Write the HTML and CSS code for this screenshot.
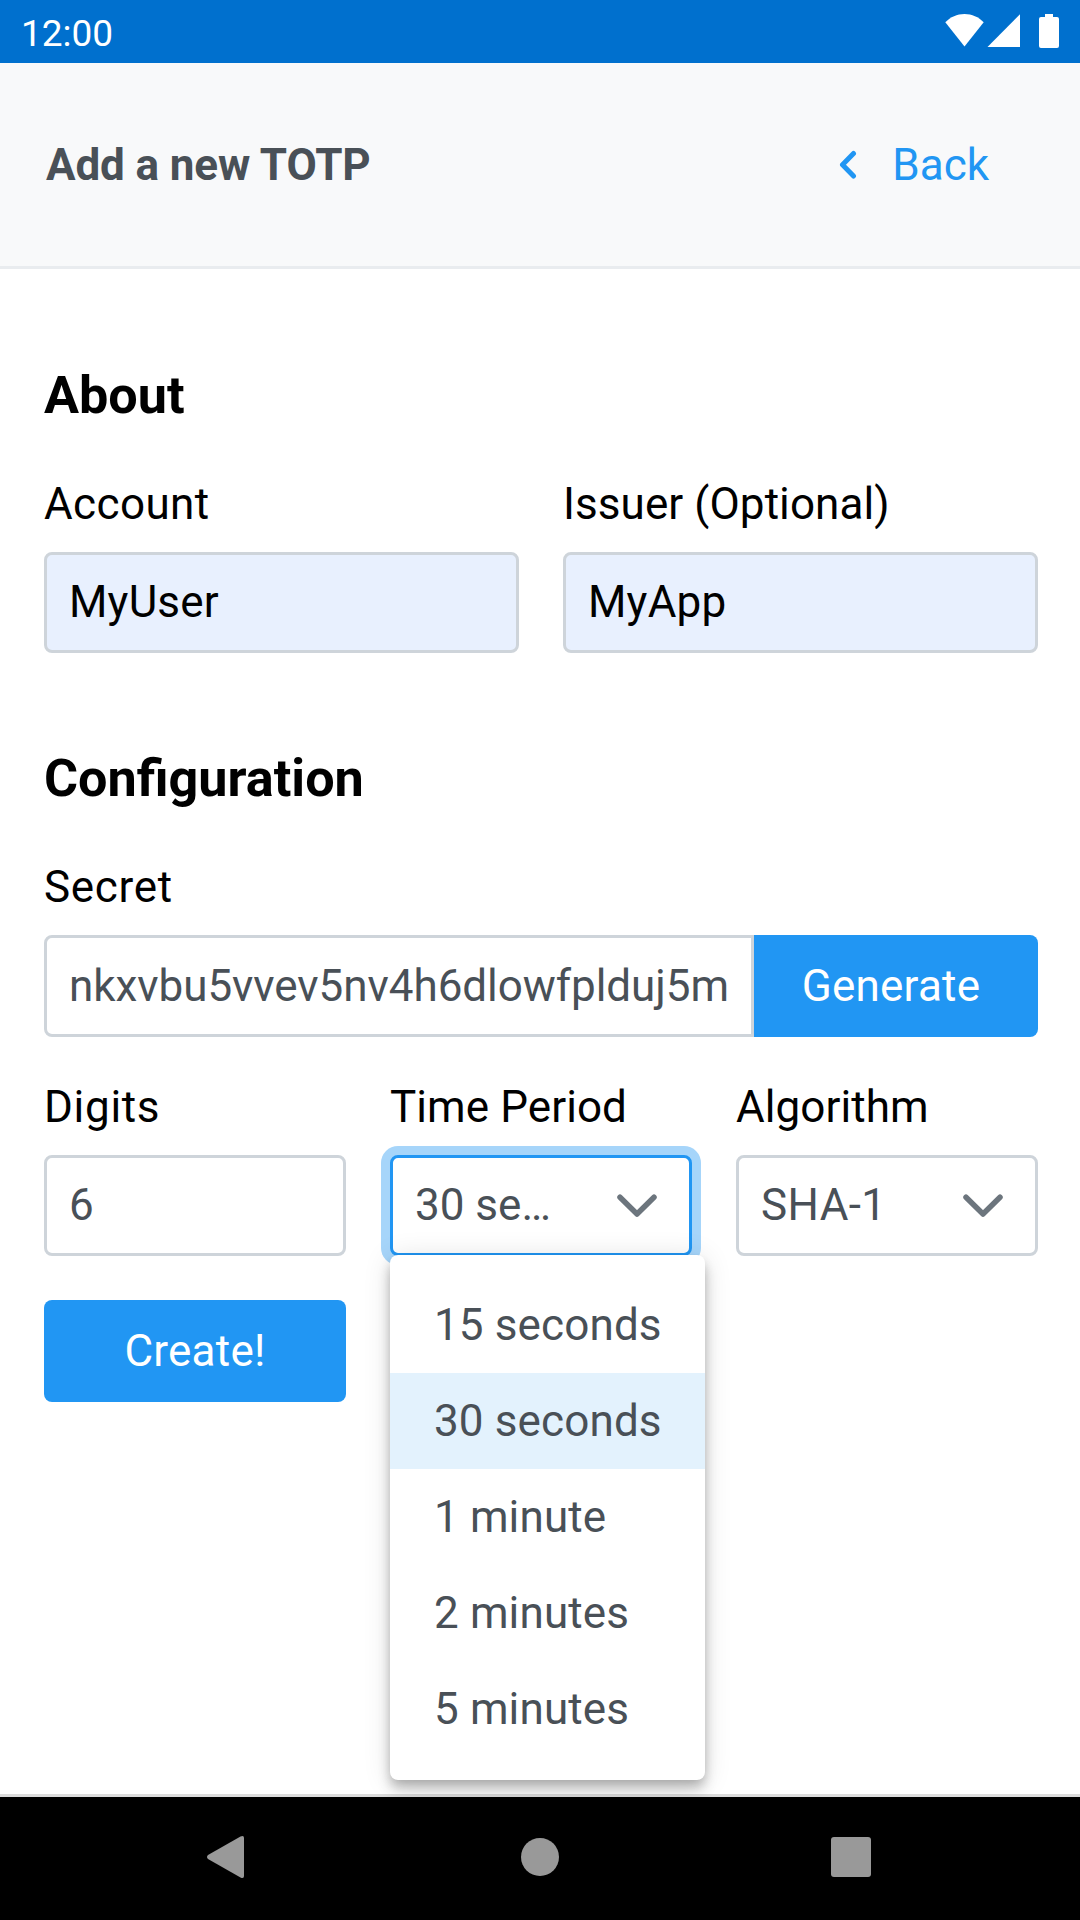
FILE: index.html
```html
<!DOCTYPE html>
<html lang="en">
<head>
<meta charset="utf-8">
<title>Add a new TOTP</title>
<link rel="stylesheet" href="styles.css">
</head>
<body>
<div class="status-bar">
  <span class="clock">12:00</span>
  <svg class="status-icons" width="116" height="36" viewBox="0 0 116 36" fill="#fff">
    <path d="M0.3 9.3C5.5 4 12 1 19.5 1s14 3 19.2 8.300L19.500 33.500z"/>
    <path d="M75 1.300V34H42.500z"/>
    <path d="M100 1h8v3h4q2 0 2 2v27q0 2-2 2h-16q-2 0-2-2V6q0-2 2-2h4z"/>
  </svg>
</div>
<header class="header">
  <h1 class="title">Add a new TOTP</h1>
  <a class="back">
    <svg width="18" height="30" viewBox="0 0 18 30" fill="none" stroke="#2196f3" stroke-width="5" stroke-linecap="round" stroke-linejoin="round"><path d="M14.500 3.500L3.500 14.800L14.500 26"/></svg>
    <span>Back</span>
  </a>
</header>
<main class="content">
  <h2 class="heading">About</h2>
  <div class="row two">
    <label class="field"><span class="label">Account</span><input class="input filled" value="MyUser"></label>
    <label class="field"><span class="label tight">Issuer (Optional)</span><input class="input filled" value="MyApp"></label>
  </div>
  <h2 class="heading second">Configuration</h2>
  <div class="field">
    <span class="label loose">Secret</span>
    <div class="group"><input class="input secret" value="nkxvbu5vvev5nv4h6dlowfplduj5m"><button class="button generate">Generate</button></div>
  </div>
  <div class="row three">
    <label class="field"><span class="label loose">Digits</span><input class="input" value="6"></label>
    <div class="field">
      <span class="label tight">Time Period</span>
      <div class="input select focused">
        <span class="value">30 seconds</span>
        <svg class="chevron" width="40" height="24" viewBox="0 0 40 24"><path d="M3 3.200L20 20L37 3.200"/></svg>
        <ul class="menu">
          <li>15 seconds</li>
          <li class="selected">30 seconds</li>
          <li>1 minute</li>
          <li>2 minutes</li>
          <li>5 minutes</li>
        </ul>
      </div>
    </div>
    <div class="field">
      <span class="label tight">Algorithm</span>
      <div class="input select">
        <span class="value algorithm">SHA-1</span>
        <svg class="chevron" width="40" height="24" viewBox="0 0 40 24"><path d="M3 3.200L20 20L37 3.200"/></svg>
      </div>
    </div>
    <button class="button create">Create!</button>
  </div>
</main>
<nav class="nav-bar">
  <svg width="38" height="44" viewBox="0 0 38 44" fill="#999"><path d="M1 20L33.500 1.500Q37 0 37 3V41Q37 44 33.500 42.500L1 24Q-1 22 1 20z"/></svg>
  <svg class="home" width="38" height="38" viewBox="0 0 38 38" fill="#999"><circle cx="19" cy="19" r="19"/></svg>
  <svg width="40" height="40" viewBox="0 0 40 40" fill="#999"><rect width="40" height="40" rx="3"/></svg>
</nav>
</body>
</html>
```

FILE: styles.css
```css
* { box-sizing: border-box; }

body {
  display: flex;
  flex-direction: column;
  width: 1080px;
  height: 1920px;
  margin: 0;
  overflow: hidden;
  background: #fff;
  color: #000;
  font: 44px/52px Roboto, sans-serif;
}

.status-bar {
  display: flex;
  justify-content: space-between;
  height: 63px;
  padding: 13px 19px 0 21px;
  background: #0070ce;
  color: #fff;
}

.clock { font-size: 37px; line-height: 42px; }

.header {
  display: flex;
  align-items: center;
  justify-content: space-between;
  height: 206px;
  padding: 0 91px 0 46px;
  border-bottom: 3px solid #e9ecef;
  background: #f8f9fa;
}

.title {
  margin: 0;
  color: #495057;
  font-size: 44px;
  font-weight: 700;
  letter-spacing: -0.120px;
}

.back {
  display: flex;
  align-items: center;
  gap: 35px;
  color: #2196f3;
}

.content {
  flex: 1;
  padding: 97px 42px 0 44px;
  border-bottom: 3px solid #dcdcdc;
}

.heading {
  margin: 0 0 52px;
  font-size: 52.150px;
  line-height: 60px;
  font-weight: 700;
}

.second { margin: 96px 0 52px; }

.row { display: grid; gap: 44px; }
.two { grid-template-columns: 1fr 1fr; }
.three { grid-template-columns: repeat(3, 1fr); margin-top: 44px; }

.field {
  display: flex;
  flex-direction: column;
  gap: 22px;
  min-width: 0;
}

.label { letter-spacing: 0.400px; }
.label.tight { letter-spacing: 0.080px; }
.label.loose { letter-spacing: 0.700px; }

.input {
  width: 100%;
  height: 101px;
  padding: 0 22px 2px;
  border: 3px solid #ced4da;
  border-radius: 8px;
  background: #fff;
  color: #495057;
  font: inherit;
}

.filled { background: #e8f0fe; color: #000; letter-spacing: 0.200px; }

.group { display: flex; height: 102px; }

.secret {
  flex: 1;
  min-width: 0;
  height: 102px;
  padding: 0 22px;
  border-radius: 8px 0 0 8px;
  letter-spacing: -0.050px;
}

.button {
  height: 102px;
  padding: 0;
  border: 0;
  border-radius: 8px;
  background: #2196f3;
  color: #fff;
  font: inherit;
  letter-spacing: 0.250px;
}

.generate {
  width: 284px;
  padding-right: 10px;
  border-radius: 0 8px 8px 0;
}

.select {
  position: relative;
  display: flex;
  align-items: center;
  justify-content: space-between;
  padding: 0 32px 0 22px;
}

.value {
  width: 138px;
  padding-bottom: 2px;
  overflow: hidden;
  text-overflow: ellipsis;
  white-space: nowrap;
}

.algorithm { letter-spacing: 0.400px; }

.chevron {
  fill: none;
  stroke: #6c757d;
  stroke-width: 5.500px;
  stroke-linecap: round;
  stroke-linejoin: round;
}

.focused {
  border-color: #2196f3;
  box-shadow: 0 0 0 9px #a6d5fa;
}

.menu {
  position: absolute;
  z-index: 1;
  top: 97px;
  left: -3px;
  width: 315px;
  margin: 0;
  padding: 22px 0 23px;
  border-radius: 8px;
  background: #fff;
  box-shadow: 0 5.500px 11px -2.750px rgba(0, 0, 0, 0.2), 0 11px 13.750px rgba(0, 0, 0, 0.14), 0 2.750px 27.500px rgba(0, 0, 0, 0.12);
  list-style: none;
}

.menu li {
  height: 96px;
  padding: 0 44px;
  line-height: 96px;
  letter-spacing: 0.130px;
  white-space: nowrap;
}

.menu .selected { background: #e3f2fd; }

.nav-bar {
  display: flex;
  align-items: center;
  justify-content: space-between;
  height: 123px;
  padding: 0 209px 3px 207px;
  background: #000;
}

.home { margin-left: 4px; }
```
